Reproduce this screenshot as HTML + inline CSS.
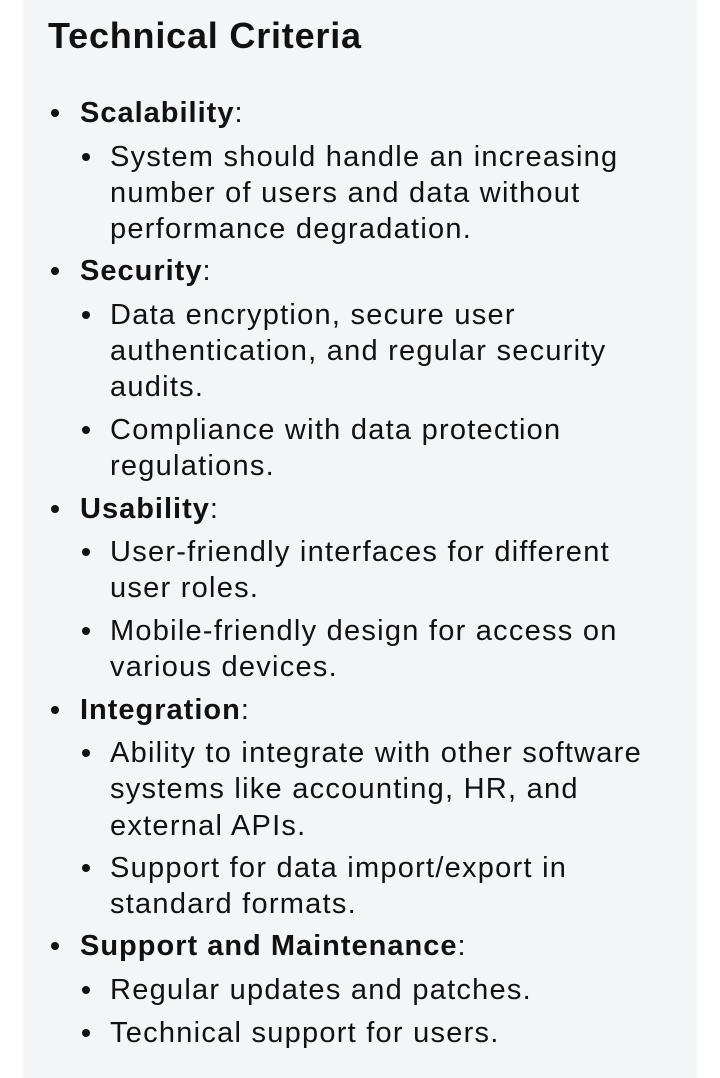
<!DOCTYPE html>
<html><head><meta charset="utf-8"><style>
html,body{margin:0;padding:0;background:#fff;width:720px;height:1078px;overflow:hidden}
.panel{position:absolute;left:23px;top:0;width:674px;height:1078px;background:#f4f5f7}
.l{position:absolute;font-family:"Liberation Sans",sans-serif;font-size:29px;line-height:36px;color:#111;white-space:nowrap;letter-spacing:1.25px}
.t{font-weight:bold;font-size:36px;letter-spacing:0.8px}
b{font-weight:bold;letter-spacing:1px}
.d{position:absolute;width:8px;height:8px;border-radius:50%;background:#111}
</style></head><body>
<div class="panel"></div>
<div class="l t" style="left:48px;top:18px">Technical Criteria</div>

<div class="d" style="left:51px;top:109px"></div><div class="l" style="left:80px;top:95px"><b>Scalability</b>:</div>
<div class="d" style="left:82px;top:153px"></div><div class="l" style="left:110px;top:139px">System should handle an increasing</div>
<div class="l" style="left:110px;top:175px">number of users and data without</div>
<div class="l" style="left:110px;top:211px">performance degradation.</div>

<div class="d" style="left:51px;top:267px"></div><div class="l" style="left:80px;top:253px"><b>Security</b>:</div>
<div class="d" style="left:82px;top:311px"></div><div class="l" style="left:110px;top:297px">Data encryption, secure user</div>
<div class="l" style="left:110px;top:333px">authentication, and regular security</div>
<div class="l" style="left:110px;top:369px">audits.</div>
<div class="d" style="left:82px;top:426px"></div><div class="l" style="left:110px;top:412px">Compliance with data protection</div>
<div class="l" style="left:110px;top:448px">regulations.</div>

<div class="d" style="left:51px;top:505px"></div><div class="l" style="left:80px;top:491px"><b>Usability</b>:</div>
<div class="d" style="left:82px;top:548px"></div><div class="l" style="left:110px;top:534px">User-friendly interfaces for different</div>
<div class="l" style="left:110px;top:570px">user roles.</div>
<div class="d" style="left:82px;top:627px"></div><div class="l" style="left:110px;top:613px">Mobile-friendly design for access on</div>
<div class="l" style="left:110px;top:649px">various devices.</div>

<div class="d" style="left:51px;top:706px"></div><div class="l" style="left:80px;top:692px"><b>Integration</b>:</div>
<div class="d" style="left:82px;top:749px"></div><div class="l" style="left:110px;top:735px">Ability to integrate with other software</div>
<div class="l" style="left:110px;top:771px">systems like accounting, HR, and</div>
<div class="l" style="left:110px;top:808px">external APIs.</div>
<div class="d" style="left:82px;top:864px"></div><div class="l" style="left:110px;top:850px">Support for data import/export in</div>
<div class="l" style="left:110px;top:886px">standard formats.</div>

<div class="d" style="left:51px;top:942px"></div><div class="l" style="left:80px;top:928px"><b>Support and Maintenance</b>:</div>
<div class="d" style="left:82px;top:986px"></div><div class="l" style="left:110px;top:972px">Regular updates and patches.</div>
<div class="d" style="left:82px;top:1029px"></div><div class="l" style="left:110px;top:1015px">Technical support for users.</div>
</body></html>
